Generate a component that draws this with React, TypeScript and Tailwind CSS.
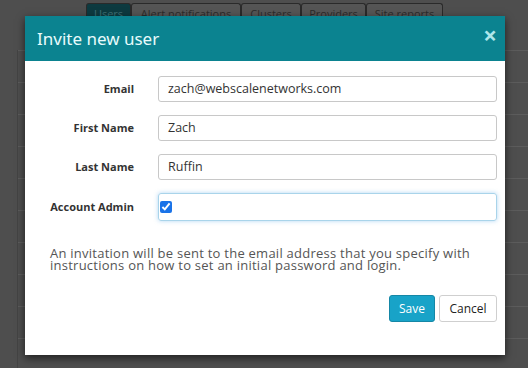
import { useState } from "react";

const tabs = [
  { label: "Users", w: "w-[45px]", active: true },
  { label: "Alert notifications", w: "w-[110px]" },
  { label: "Clusters", w: "w-[60px]" },
  { label: "Providers", w: "w-[65px]" },
  { label: "Site reports", w: "w-[77px]" },
];

const fields = [
  { label: "Email", value: "zach@webscalenetworks.com" },
  { label: "First Name", value: "Zach" },
  { label: "Last Name", value: "Ruffin" },
];

const App = () => {
  const [admin, setAdmin] = useState(true);

  return (
    <div
      className="relative h-[368px] w-[528px] overflow-hidden bg-[#4e4e4e]"
      style={{ fontFamily: '"Open Sans", "Liberation Sans", sans-serif' }}
    >
      {/* page behind the overlay */}
      <div className="flex pl-[86px] pt-[3px]">
        {tabs.map((t) => (
          <div
            key={t.label}
            className={`${t.w} h-[20px] overflow-hidden whitespace-nowrap rounded-t-[3px] border border-b-0 border-[#2a2a2a] pt-[3px] text-center text-[11px] leading-[14px] ${
              t.active ? "bg-[#0d3a40] text-[#3f6e74]" : "bg-[#555555] text-[#2b2b2b]"
            }`}
          >
            {t.label}
          </div>
        ))}
      </div>
      <div className="mt-[27px] border-l border-[#444] ml-[17px]">
        {Array.from({ length: 10 }).map((_, i) => (
          <div key={i} className="h-[32px] border-t border-[#5c5c5c]" />
        ))}
      </div>

      {/* modal */}
      <div className="absolute left-[25px] top-[16px] w-[480px] bg-white shadow-[0_3px_8px_rgba(0,0,0,0.6)]">
        <div className="flex h-[45px] items-center justify-between bg-[#0b8390] pl-[12px] pr-[8px]">
          <h2 className="text-[17px] text-[#e8fbfc]" style={{ fontFamily: '"Noto Sans", sans-serif' }}>
            Invite new user
          </h2>
          <span className="-mt-[8px] text-[24px] font-bold leading-none text-[#aee6ea]">×</span>
        </div>

        <div className="flex flex-col gap-[13px] pr-[8px] pt-[15px]">
          {fields.map((f) => (
            <div key={f.label} className="flex items-center">
              <label className="w-[109px] text-right text-[11px] font-bold text-[#333]">{f.label}</label>
              <div className="ml-[24px] flex h-[26px] flex-1 items-center rounded-[3px] border border-[#c8c8c8] px-[9px] text-[12.5px] text-[#333]">
                {f.value}
              </div>
            </div>
          ))}
          <div className="flex items-center">
            <label className="w-[109px] text-right text-[11px] font-bold text-[#333]">Account Admin</label>
            <div className="ml-[24px] flex h-[28px] flex-1 items-center rounded-[3px] border border-[#a9d4ea] px-[1px] shadow-[0_0_4px_rgba(102,175,233,0.5)]">
              <input
                type="checkbox"
                checked={admin}
                onChange={(e) => setAdmin(e.target.checked)}
                className="h-[12px] w-[12px] accent-[#1a73e8]"
              />
            </div>
          </div>
        </div>

        <p className="mt-[26px] px-[25px] text-[13px] leading-[12px] tracking-[0.25px] text-[#555]">
          An invitation will be sent to the email address that you specify with instructions on how to set an initial
          password and login.
        </p>

        <div className="flex justify-end gap-[4px] pr-[8px] pt-[24px] pb-[33px]">
          <button className="h-[27px] w-[46px] rounded-[3px] border border-[#1587a6] bg-[#18a3c8] text-[12px] text-white">
            Save
          </button>
          <button className="h-[27px] w-[58px] rounded-[3px] border border-[#cfcfcf] bg-white text-[12px] text-[#222]">
            Cancel
          </button>
        </div>
      </div>
    </div>
  );
};

export default App;
